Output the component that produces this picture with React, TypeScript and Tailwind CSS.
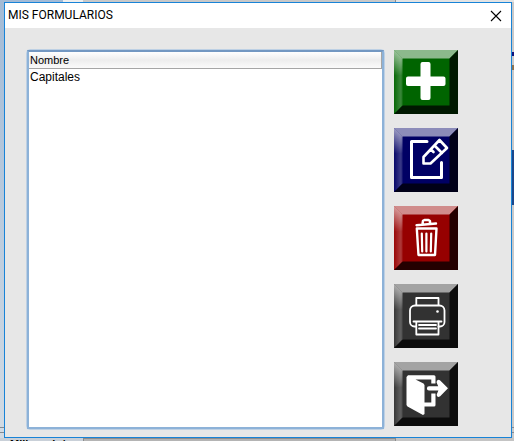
import type { ReactNode } from "react";

type Action = { label: string; color: string; icon: ReactNode };

const actions: Action[] = [
  {
    label: "Agregar",
    color: "#006400",
    icon: (
      <path
        fill="#fff"
        d="M28.500 12h6a2 2 0 0 1 2 2v12.500h13a2 2 0 0 1 2 2v5.500a2 2 0 0 1-2 2h-13v12a2 2 0 0 1-2 2h-6a2 2 0 0 1-2-2v-12H14a2 2 0 0 1-2-2v-5.500a2 2 0 0 1 2-2h12.500V14a2 2 0 0 1 2-2z"
      />
    ),
  },
  {
    label: "Editar",
    color: "#000064",
    icon: (
      <g fill="none" stroke="#fff" strokeWidth="3" strokeLinejoin="round" strokeLinecap="round">
        <path d="M33 13.500H17.500v36h30v-15" />
        <path strokeWidth="2.600" d="M29.500 35.500v-6.500L45.500 12l7.500 8-16.500 15.500zM40.500 17.500l7.500 7.500M37 21.500l2.500 2.500" />
      </g>
    ),
  },
  {
    label: "Eliminar",
    color: "#960000",
    icon: (
      <g fill="none" stroke="#fff" strokeWidth="2.400" strokeLinejoin="round" strokeLinecap="round">
        <path d="M22.500 19.200l19.500-1.700M28.500 17.800l.5-3 1.500-.8h4l1.500 1v2.500" />
        <path d="M22.800 22.500h19.700l-1.500 26.500H24.500z" />
        <path strokeWidth="2.200" d="M27.800 27.500l.4 18M32.400 27.500v18M37.200 27.500l-.4 18" />
      </g>
    ),
  },
  {
    label: "Imprimir",
    color: "#323232",
    icon: (
      <g fill="none" stroke="#fff" strokeWidth="1.800" strokeLinejoin="round" strokeLinecap="round">
        <path d="M22.300 21v-7h22.200v7" />
        <path d="M22 42.500h-1.500a4.500 4.500 0 0 1-4.500-4.500V26.500a5 5 0 0 1 5-5h24.500a5 5 0 0 1 5 5V38a4.500 4.500 0 0 1-4.500 4.500h-1.500" />
        <path d="M19.500 37.500h28M22.300 37.500v13h22.200v-13M25 41h17M25 44.500h17" />
        <circle cx="43.500" cy="27.500" r="1.300" fill="#fff" stroke="none" />
      </g>
    ),
  },
  {
    label: "Salir",
    color: "#323232",
    icon: (
      <g fill="#fff">
        <path d="M14 13.300h26a1.500 1.500 0 0 1 1.500 1.500V21.500h-4.200v-4H21.500l8 4 1 1.500v17.400h6.800V31.500h4.200v11.500a1.500 1.500 0 0 1-1.500 1.500h-9.500V52l-1.500 1L13.500 44.500l-1-1.500V15z" />
        <path d="M35 24.300h9.200l-1.700-4 .5-1.800 1.700-.7 1.500.7 7.800 7.800-7.800 8-1.700.7-1.500-.8-.3-1.700 1.700-4H35a2 2 0 0 1 0-4.200z" />
      </g>
    ),
  },
];

function BevelButton({ label, color, icon }: Action) {
  return (
    <button type="button" aria-label={label} className="block size-16 shrink-0">
      <svg viewBox="0 0 64 64" className="block size-16 overflow-hidden">
        <defs>
          <filter id={`${label}-soft`} x="-10" y="-10" width="84" height="84" filterUnits="userSpaceOnUse">
            <feGaussianBlur stdDeviation=".7" />
          </filter>
          <linearGradient id={`${label}-left`} x1="0" y1="0" x2="9" y2="0" gradientUnits="userSpaceOnUse">
            <stop offset="0" stopColor="#fff" stopOpacity=".03" />
            <stop offset=".7" stopColor="#fff" stopOpacity=".22" />
            <stop offset="1" stopColor="#fff" stopOpacity=".12" />
          </linearGradient>
          <linearGradient id={`${label}-shine`} x1="0" y1="0" x2="0" y2="64" gradientUnits="userSpaceOnUse">
            <stop offset="0" stopColor="#fff" stopOpacity=".6" />
            <stop offset=".4" stopColor="#fff" stopOpacity="0" />
          </linearGradient>
        </defs>
        <rect width="64" height="64" fill={color} />
        <g filter={`url(#${label}-soft)`}>
          <path d="M-6-6L8.500 8.500v47L-6 70z" fill={`url(#${label}-left)`} />
          <path d="M-6-6L8.500 8.500v47L-6 70z" fill={`url(#${label}-shine)`} />
          <path d="M-6-6h76L55.500 8.500h-47z" fill="#fff" fillOpacity=".55" />
          <path d="M70-6v76H-6L8.500 55.500h47v-47z" fill="#000" fillOpacity=".76" />
        </g>
        {icon}
      </svg>
    </button>
  );
}

function TitleBar() {
  return (
    <header className="flex h-[25px] items-center justify-between bg-white pl-[3px] pr-[9px]">
      <h1 className="pb-px font-[Roboto,sans-serif] text-[12px] leading-4 font-normal text-black">MIS FORMULARIOS</h1>
      <button type="button" aria-label="Cerrar" className="block">
        <svg viewBox="0 0 12 12" className="block size-3" stroke="#000" strokeWidth="1.100">
          <path d="M1 1l10 10M11 1L1 11" />
        </svg>
      </button>
    </header>
  );
}

function FormList() {
  return (
    <div className="flex flex-1 rounded-sm border border-[#bdd0e4] bg-white">
      <div className="flex-1 border-2 border-[#8db2d8] border-t-[#7398c2]">
        <table className="w-full border-separate border-spacing-0 text-left text-black">
          <thead>
            <tr>
              <th className="h-[17px] border-r border-b border-[#a5a5a5] bg-linear-to-b from-white via-[#ededed] to-[#fafafa] p-0 pl-px text-[11px] leading-4 font-normal">
                Nombre
              </th>
            </tr>
          </thead>
          <tbody>
            <tr>
              <td className="p-0 pl-px text-[12px] leading-4">Capitales</td>
            </tr>
          </tbody>
        </table>
      </div>
    </div>
  );
}

export default function App() {
  return (
    <div className="flex min-h-screen flex-col overflow-hidden bg-[#d3d7dc] font-['Liberation_Sans',Arial,sans-serif]">
      <div className="flex h-[2px]">
        <div className="w-[63px] bg-[#a3bbd6]" />
        <div className="w-5 bg-[#eeeeee]" />
        <div className="w-[312px] bg-[#c8c8c8]" />
        <div className="flex-1 border-l border-[#8c8c8c] bg-[#e3e3e3]" />
      </div>

      <div className="flex flex-1">
        <div className="flex w-1 flex-col bg-linear-to-b from-[#a3bbd6] to-[#d3dbe3]">
          <div className="mt-auto mb-[5px] h-[6px] border-y border-[#858b91]" />
        </div>

        <main className="flex flex-1 flex-col border border-[#1883d7] bg-[#e7e7e7]">
          <TitleBar />
          <div className="flex flex-1 gap-[9px] pt-[21px] pr-[53px] pb-[7px] pl-[21px]">
            <FormList />
            <nav className="flex flex-col gap-[14px] pt-px">
              {actions.map((action) => (
                <BevelButton key={action.label} {...action} />
              ))}
            </nav>
          </div>
        </main>

        <div className="flex w-[2px] flex-col bg-[#c9c9c9]">
          <div className="mt-[50px] h-1 bg-[#10107a]" />
          <div className="mt-[9px] h-[5px] bg-[#8f7350]" />
          <div className="mt-20 h-[55px] bg-[#1c478a]" />
          <div className="mt-auto mb-[5px] h-[6px] border-y border-[#858b91]" />
        </div>
      </div>

      <div className="flex h-[3px] overflow-hidden bg-[#c9d0d8] text-[11px] leading-3 text-black">
        <div className="w-[83px] pl-[10px] font-bold">Millonario/</div>
        <div className="w-[312px] border-t border-l border-[#8c8c8c] bg-[#b4b4b4]" />
        <div className="flex-1 border-l border-[#8c8c8c] bg-[#c4c4c4]" />
      </div>
    </div>
  );
}
